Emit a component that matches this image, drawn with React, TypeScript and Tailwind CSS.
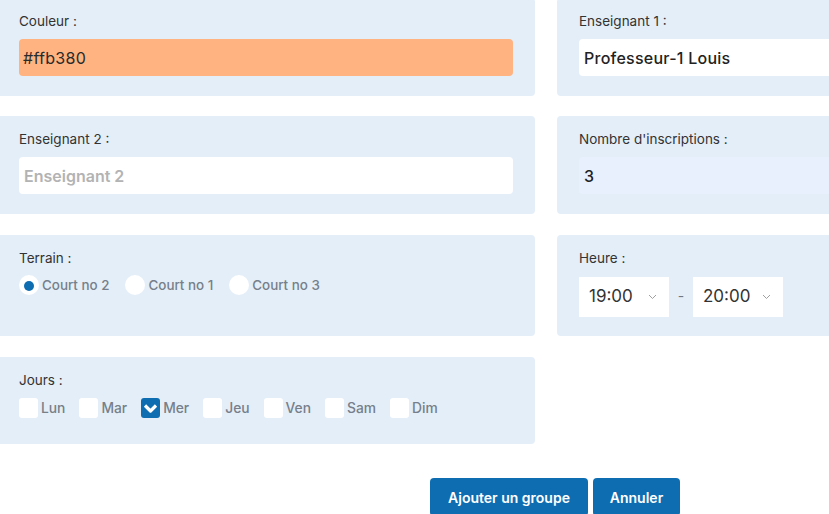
import React from "react"

const courts = [
  { name: "Court no 2", checked: true },
  { name: "Court no 1", checked: false },
  { name: "Court no 3", checked: false },
]

const days = [
  { name: "Lun", checked: false },
  { name: "Mar", checked: false },
  { name: "Mer", checked: true },
  { name: "Jeu", checked: false },
  { name: "Ven", checked: false },
  { name: "Sam", checked: false },
  { name: "Dim", checked: false },
]

function Card({ label, className, children }: { label: string; className: string; children: React.ReactNode }) {
  return (
    <div className={`rounded-[4px] bg-[#e4eef8] px-[22px] pt-[13px] ${className}`}>
      <div className="text-[13.5px] leading-[20px] text-[#333]">{label}</div>
      {children}
    </div>
  )
}

function Chevron() {
  return (
    <svg width="9" height="6" viewBox="0 0 9 6" fill="none" className="ml-auto">
      <path d="M1 1 L4.5 4.5 L8 1" stroke="#a0a0a0" strokeWidth="1" />
    </svg>
  )
}

export default function App() {
  return (
    <div className="w-[829px] h-[514px] overflow-hidden bg-white font-['Inter',sans-serif]">
      <div className="-ml-[3px] -mt-[2px] w-[1098px] grid grid-cols-2 gap-x-[22px] gap-y-[20px]">
        <Card label="Couleur :" className="h-[98px]">
          <div className="mt-[8px] h-[37px] rounded-[4px] bg-[#ffb380] pl-[4px] flex items-center text-[16px] tracking-[0.3px] text-[#2a2a2a]">
            #ffb380
          </div>
        </Card>
        <Card label="Enseignant 1 :" className="h-[98px]">
          <div className="mt-[8px] h-[37px] rounded-[4px] bg-white pl-[5px] flex items-center text-[16px] tracking-[0.25px] font-medium text-[#222]">
            Professeur-1 Louis
          </div>
        </Card>

        <Card label="Enseignant 2 :" className="h-[98px] mb-[1px]">
          <div className="mt-[8px] h-[37px] rounded-[4px] bg-white pl-[5px] flex items-center text-[16px] font-semibold text-[#b3b3b3]">
            Enseignant 2
          </div>
        </Card>
        <Card label="Nombre d'inscriptions :" className="h-[98px] mb-[1px]">
          <div className="mt-[8px] h-[37px] rounded-[4px] bg-[#e8f0fd] pl-[5px] flex items-center text-[16px] font-medium text-[#222]">
            3
          </div>
        </Card>

        <Card label="Terrain :" className="h-[101px] mb-[1px]">
          <div className="mt-[7px] flex items-center">
            {courts.map((c) => (
              <label key={c.name} className="flex items-center mr-[16px]">
                <span className="w-[20px] h-[20px] rounded-full bg-white flex items-center justify-center">
                  {c.checked && <span className="w-[10px] h-[10px] rounded-full bg-[#0e6cb0] mt-[1px]" />}
                </span>
                <span className="ml-[3px] text-[13.4px] font-medium leading-[20px] text-[#767f8a]">{c.name}</span>
              </label>
            ))}
          </div>
        </Card>
        <Card label="Heure :" className="h-[101px] mb-[1px]">
          <div className="mt-[9px] flex items-center">
            <div className="w-[90px] h-[40px] bg-white flex items-center pl-[10px] pr-[12px] text-[17px] text-[#333]">
              19:00
              <Chevron />
            </div>
            <span className="w-[24px] text-center text-[14px] text-[#6f7884] -mt-[4px]">-</span>
            <div className="w-[90px] h-[40px] bg-white flex items-center pl-[10px] pr-[12px] text-[17px] text-[#333]">
              20:00
              <Chevron />
            </div>
          </div>
        </Card>

        <Card label="Jours :" className="h-[87px]">
          <div className="mt-[8px] flex items-center">
            {days.map((d) => (
              <label key={d.name} className="flex items-center mr-[14px]">
                <span
                  className={`w-[19px] h-[20px] rounded-[3px] flex items-center justify-center ${
                    d.checked ? "bg-[#0e6cb0]" : "bg-white"
                  }`}
                >
                  {d.checked && (
                    <svg width="19" height="20" viewBox="0 0 19 20" fill="none">
                      <path d="M4 7.5 L9.5 13 L15 7.5" stroke="white" strokeWidth="3.2" strokeLinejoin="round" />
                    </svg>
                  )}
                </span>
                <span className="ml-[3px] text-[13.8px] font-medium leading-[20px] text-[#767f8a]">{d.name}</span>
              </label>
            ))}
          </div>
        </Card>
        <div />
      </div>

      <div className="mt-[34px] pl-[430px] flex gap-[5px]">
        <button className="w-[158px] h-[38px] rounded-[4px] bg-[#0e6db1] text-white text-[14px] font-semibold">
          Ajouter un groupe
        </button>
        <button className="w-[87px] h-[38px] rounded-[4px] bg-[#0e6db1] text-white text-[14px] font-semibold">
          Annuler
        </button>
      </div>
    </div>
  )
}
